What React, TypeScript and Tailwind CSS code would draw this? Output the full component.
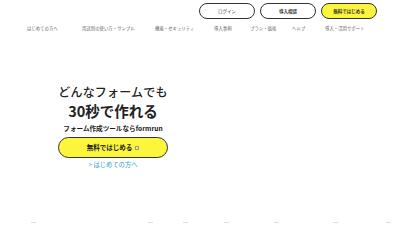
import React from "react";

const font = { fontFamily: '"Noto Sans CJK JP", "Noto Sans", sans-serif' };

export default function App() {
  return (
    <div className="w-[400px] h-[225px] bg-white overflow-hidden relative text-[#222]" style={font}>
      <div className="flex justify-end gap-[5px] pt-[3px] pr-[23px]">
        <div className="w-[56px] h-[16px] rounded-full border border-[#333] flex items-center justify-center text-[4.5px] text-[#333]">ログイン</div>
        <div className="w-[56px] h-[16px] rounded-full border border-[#333] flex items-center justify-center text-[4.5px] font-bold text-[#333]">導入相談</div>
        <div className="w-[56px] h-[16px] rounded-full border border-[#333] bg-[#fbf53c] flex items-center justify-center text-[4.5px] font-bold text-[#333]">無料ではじめる</div>
      </div>
      <div className="flex pl-[27px] mt-[7px] text-[4.4px] text-[#666] leading-none">
        <span className="w-[55px] whitespace-nowrap">はじめての方へ</span>
        <span className="w-[73px] whitespace-nowrap">用途別の使い方・サンプル</span>
        <span className="w-[59px] whitespace-nowrap">機能・セキュリティ</span>
        <span className="w-[36px] whitespace-nowrap">導入事例</span>
        <span className="w-[42px] whitespace-nowrap">プラン・価格</span>
        <span className="w-[33px] whitespace-nowrap">ヘルプ</span>
        <span className="whitespace-nowrap">導入・活用サポート</span>
      </div>
      <div className="flex flex-col items-center w-[226px] mt-[54px]">
        <div className="text-[12px] leading-[16px] font-medium tracking-[0.2px]">どんなフォームでも</div>
        <div className="text-[14.5px] leading-[20px] font-bold mt-[1px]">30秒で作れる</div>
        <div className="text-[6.6px] leading-[10px] font-bold mt-[2px]">フォーム作成ツールならformrun</div>
        <div className="mt-[4px] w-[110px] h-[21px] rounded-full border border-[#333] bg-[#fbf53c] flex items-center justify-center text-[6.5px] font-bold">
          無料ではじめる<span className="ml-[3px] inline-block w-[4px] h-[4px] border-[0.5px] border-[#999]"></span>
        </div>
        <div className="mt-[2px] text-[6.3px] text-[#2aa7c9] leading-[10px]">&gt; はじめての方へ</div>
      </div>
      <div className="absolute left-0 right-0 top-[222px] h-[2px]">
        {[33, 150, 185, 226, 276, 335, 388].map((x) => (
          <span key={x} className="absolute top-0 w-[5px] h-[1px] bg-[#ddd]" style={{ left: x - 2 }} />
        ))}
      </div>
    </div>
  );
}
